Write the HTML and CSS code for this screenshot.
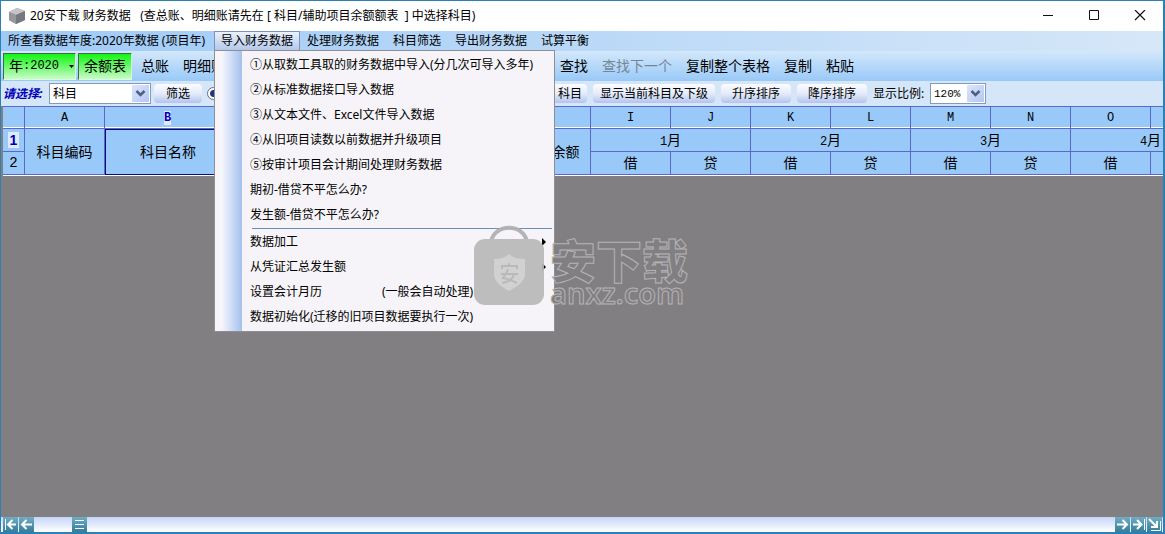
FILE: index.html
```html
<!DOCTYPE html>
<html lang="zh-CN">
<head>
<meta charset="utf-8">
<title>20安下载 财务数据</title>
<link rel="stylesheet" href="styles.css">
</head>
<body>
<div class="window">
  <header class="titlebar">
    <svg class="app-icon" width="18" height="18" viewBox="0 0 18 18"><path d="M1 5L9 1L17 4V13L8 17L1 13Z" fill="#8b8b93"/><path d="M1 5L9 1L17 4L8 8Z" fill="#c5c5c9"/><path d="M8 8L17 4V13L8 17Z" fill="#77777f"/><path d="M1 5L8 8V17L1 13Z" fill="#96969c"/></svg>
    <h1 class="title">20安下载 财务数据&nbsp;&nbsp; (查总账、明细账请先在 [ 科目/辅助项目余额额表&nbsp; ] 中选择科目)</h1>
    <div class="win-buttons">
      <button class="win-button" aria-label="最小化"><svg width="12" height="12" viewBox="0 0 12 12"><path d="M1 5.500H11" stroke="#111" fill="none"/></svg></button>
      <button class="win-button" aria-label="最大化"><svg width="12" height="12" viewBox="0 0 12 12"><path d="M1.500 0.500H10.500V9.500H1.500Z" stroke="#111" fill="none"/></svg></button>
      <button class="win-button" aria-label="关闭"><svg width="12" height="12" viewBox="0 0 12 12"><path d="M1 0L11 10M11 0L1 10" stroke="#111" stroke-width="1.200" fill="none"/></svg></button>
    </div>
  </header>

  <nav class="menubar">
    <span class="menu-label">所查看数据年度:2020年数据 (项目年)</span>
    <div class="menu-holder">
      <button class="menu-button open" aria-expanded="true">导入财务数据</button>
      <div class="popup" role="menu">
        <button class="entry" role="menuitem">①从取数工具取的财务数据中导入(分几次可导入多年)</button>
        <button class="entry" role="menuitem">②从标准数据接口导入数据</button>
        <button class="entry" role="menuitem">③从文本文件、Excel文件导入数据</button>
        <button class="entry" role="menuitem">④从旧项目读数以前数据并升级项目</button>
        <button class="entry" role="menuitem">⑤按审计项目会计期间处理财务数据</button>
        <button class="entry" role="menuitem">期初-借贷不平怎么办?</button>
        <button class="entry" role="menuitem">发生额-借贷不平怎么办?</button>
        <div class="separator" role="separator"></div>
        <button class="entry has-sub" role="menuitem">数据加工</button>
        <button class="entry has-sub" role="menuitem">从凭证汇总发生额</button>
        <button class="entry" role="menuitem">设置会计月历<span class="entry-note">(一般会自动处理)</span></button>
        <button class="entry" role="menuitem">数据初始化(迁移的旧项目数据要执行一次)</button>
      </div>
    </div>
    <button class="menu-button">处理财务数据</button>
    <button class="menu-button">科目筛选</button>
    <button class="menu-button">导出财务数据</button>
    <button class="menu-button">试算平衡</button>
  </nav>

  <div class="toolbar">
    <button class="tool green year">年<span class="mono">:2020</span><svg class="caret" width="5" height="3" viewBox="0 0 5 3"><path d="M0 0H5L2.500 3Z"/></svg></button>
    <button class="tool green">余额表</button>
    <button class="tool">总账</button>
    <button class="tool">明细账</button>
    <span class="tool-gap"></span>
    <button class="tool">查找</button>
    <button class="tool" disabled>查找下一个</button>
    <button class="tool">复制整个表格</button>
    <button class="tool">复制</button>
    <button class="tool">粘贴</button>
  </div>

  <div class="filterbar">
    <label class="pick" for="field">请选择:</label>
    <span class="combo combo-field">
      <select id="field"><option>科目</option></select>
      <svg class="drop" width="17" height="17" viewBox="0 0 17 17"><path d="M4.500 6L8.500 10L12.500 6" fill="none" stroke="#4d6185" stroke-width="2.500"/></svg>
    </span>
    <button class="pill pill-filter">筛选</button>
    <input class="radio" type="radio" name="scope" checked aria-label="科目">
    <span class="filter-gap"></span>
    <button class="pill pill-subject">科目</button>
    <button class="pill pill-current">显示当前科目及下级</button>
    <button class="pill pill-sort">升序排序</button>
    <button class="pill pill-sort">降序排序</button>
    <label class="zoom-label" for="zoom">显示比例:</label>
    <span class="combo combo-zoom">
      <select id="zoom"><option>120%</option></select>
      <svg class="drop" width="17" height="17" viewBox="0 0 17 17"><path d="M4.500 6L8.500 10L12.500 6" fill="none" stroke="#4d6185" stroke-width="2.500"/></svg>
    </span>
  </div>

  <main class="sheet">
    <table class="grid">
      <colgroup><col class="c-row"><col class="c-code"><col class="c-name"><col class="c-mid" span="5"><col class="c-month" span="9"></colgroup>
      <thead>
        <tr><th></th><th>A</th><th><b class="current">B</b></th><th></th><th></th><th></th><th></th><th></th><th></th><th>I</th><th>J</th><th>K</th><th>L</th><th>M</th><th>N</th><th>O</th><th></th></tr>
      </thead>
      <tbody>
        <tr><th><b class="current row">1</b></th><td rowspan="2">科目编码</td><td rowspan="2" class="selected">科目名称</td><td rowspan="2"></td><td rowspan="2"></td><td rowspan="2"></td><td rowspan="2"></td><td rowspan="2"></td><td rowspan="2" class="balance">余额</td><td colspan="2"><span class="mono">1</span>月</td><td colspan="2"><span class="mono">2</span>月</td><td colspan="2"><span class="mono">3</span>月</td><td colspan="2"><span class="mono">4</span>月</td></tr>
        <tr><th class="row-number">2</th><td>借</td><td>贷</td><td>借</td><td>贷</td><td>借</td><td>贷</td><td>借</td><td></td></tr>
      </tbody>
    </table>
  </main>

  <footer class="scrollbar">
    <button class="scroll" aria-label="最左"><svg width="15" height="15" viewBox="0 0 15 15"><path d="M2.500 2V13" stroke-width="1"/><path d="M13 7.500H5M9.500 3L5 7.500L9.500 12"/></svg></button>
    <button class="scroll" aria-label="向左"><svg width="15" height="15" viewBox="0 0 15 15"><path d="M13 7.500H3M7.500 3L3 7.500L7.500 12"/></svg></button>
    <button class="scroll thumb" aria-label="滑块"><svg width="15" height="15" viewBox="0 0 15 15"><path d="M3 3.500H12M3 7.500H12M3 11.500H12" stroke-width="1"/></svg></button>
    <button class="scroll right" aria-label="向右"><svg width="15" height="15" viewBox="0 0 15 15"><path d="M2 7.500H12M7.500 3L12 7.500L7.500 12"/></svg></button>
    <button class="scroll" aria-label="最右"><svg width="15" height="15" viewBox="0 0 15 15"><path d="M13.500 2V13" stroke-width="1"/><path d="M2 7.500H10M6 3L10.500 7.500L6 12"/></svg></button>
    <button class="scroll" aria-label="调整大小"><svg width="15" height="15" viewBox="0 0 15 15"><path d="M2 2L10 10M10 4V10H4"/><path d="M13.500 4V13.500H4" stroke-width="1"/></svg></button>
  </footer>

  <div class="watermark">
    <svg class="bag" width="70" height="80" viewBox="0 0 70 80">
      <path d="M17 17C20 -2 50 -2 53 17" fill="none" stroke="#afafb0" stroke-width="4"/>
      <rect x="0" y="14" width="70" height="66" rx="11" fill="#b9b9b9"/>
      <path d="M35 29C31 33 26 34 20 34V49C20 57 28 62 35 66C42 62 51 57 51 49V34C44 34 39 33 35 29Z" fill="#cfcfcf"/>
      <path d="M35 38V41M28 44V41H43V44M27 49H44M34 44C33 49 31 51 29 53C34 54 39 56 43 58M40 49C39 54 34 57 28 58" fill="none" stroke="#b5b5b5" stroke-width="2"/>
    </svg>
    <div class="brand"><span class="brand-name">安下载</span><span class="brand-site">anxz.com</span></div>
  </div>
</div>
</body>
</html>
```
FILE: styles.css
```css
* { box-sizing: border-box; }
body {
  margin: 0;
  font: 12px/18px "Noto Sans", "Noto Sans CJK SC", sans-serif;
  color: #000;
}
button, select { font: inherit; color: inherit; }
button { border: 0; margin: 0; padding: 0; background: none; white-space: nowrap; flex-shrink: 0; }
svg { display: block; }
.mono { font-family: "Liberation Mono", monospace; font-size: 12px; line-height: 12px; }

.window {
  position: relative;
  height: 100vh;
  display: flex;
  flex-direction: column;
  border: 1px solid #2b81b5;
  border-right-width: 2px;
  border-bottom-width: 2px;
  overflow: hidden;
}

.titlebar { display: flex; align-items: center; height: 30px; padding-left: 7px; background: #fff; }
.title { margin: 0 0 0 4px; font-size: 12px; font-weight: 400; white-space: nowrap; }
.win-buttons { display: flex; margin-left: auto; }
.win-button { display: grid; place-items: center; width: 46px; height: 28px; }

.menubar {
  display: flex;
  height: 20px;
  background: linear-gradient(90deg, #9ecaf7, #d6e7f8);
}
.menu-label { padding: 0 7px; width: 213px; line-height: 20px; white-space: nowrap; }
.menu-holder { position: relative; }
.menu-button { padding: 0 7px; height: 19px; line-height: 18px; }
.menu-button.open {
  background: linear-gradient(#eaf1fc, #b4c8ea);
  border: 1px solid #7c93bd;
  border-bottom: 0;
  padding: 0 6px;
}

.popup {
  position: absolute;
  z-index: 2;
  left: 0;
  top: 19px;
  width: 341px;
  padding: 1px 2px 2px 0;
  border: 1px solid #8e8e96;
  background: linear-gradient(90deg, #f7f5f9 6px, #f4f6fc 7px, #a4c0ee 27px, #f6f4f8 27px);
}
.entry { display: flex; align-items: center; width: 100%; height: 25px; padding-left: 35px; text-align: left; }
.entry-note { margin-left: 60px; }
.has-sub::after {
  content: "";
  margin: 0 6px 0 auto;
  border: 4px solid transparent;
  border-left-color: #000;
  border-right: 0;
}
.separator { height: 1px; margin: 1px 0 0 37px; background: #6b8fb8; }

.toolbar {
  display: flex;
  align-items: center;
  height: 30px;
  padding-left: 2px;
  font-size: 14px;
  background: linear-gradient(#d3e8fb, #99c9f8);
}
.tool { height: 27px; padding: 0 7px; }
.tool:disabled { color: #758696; }
.tool.green {
  margin-right: 2px;
  padding: 0 5px;
  border: 1px solid #3c6c4c;
  border-right-color: #d9ffd9;
  border-bottom-color: #d9ffd9;
  background: linear-gradient(#12f512, #c9fcc9);
}
.tool.year { display: flex; align-items: center; width: 73px; padding-right: 1px; }
.caret { margin-left: auto; }
.tool-gap { width: 321px; flex: none; }

.filterbar {
  display: flex;
  align-items: center;
  height: 25px;
  padding-left: 2px;
  background: #d4e6f8;
}
.pick { width: 46px; font-weight: 700; font-style: italic; color: #0000b8; white-space: nowrap; }
.combo { position: relative; flex: none; height: 21px; }
.combo select {
  appearance: none;
  display: block;
  width: 100%;
  height: 100%;
  padding: 0 3px;
  border: 1px solid #7f9db9;
  border-radius: 0;
  background: #fff;
}
.combo-field { width: 102px; }
.combo-zoom { width: 56px; }
.combo-zoom select { font-family: "Liberation Mono", monospace; font-size: 11px; }
.drop { position: absolute; right: 2px; top: 2px; background: linear-gradient(135deg, #dce5fd, #b5c7f2); pointer-events: none; }
.pill {
  height: 19px;
  margin-right: 6px;
  line-height: 18px;
  border-radius: 4px;
  background: linear-gradient(#fbfcff, #e4ebfa 50%, #b3c4ec);
}
.pill-filter { width: 48px; margin: 0 5px 0 3px; }
.radio {
  appearance: none;
  width: 13px;
  height: 13px;
  margin: 0;
  flex: none;
  border: 1px solid #60708c;
  border-radius: 50%;
  background: radial-gradient(circle, #26367c 3px, #fff 4px);
}
.filter-gap { width: 327px; flex: none; }
.pill-subject { width: 40px; padding-left: 6px; }
.pill-current { width: 122px; }
.pill-sort { width: 70px; }
.zoom-label { width: 57px; white-space: nowrap; }

.sheet { flex: 1; min-height: 0; padding-left: 2px; overflow: hidden; background: #827f82; }
.grid {
  table-layout: fixed;
  width: 1228px;
  border-spacing: 0;
  background: #99c9f9;
  border-top: 1px solid #5a68cc;
  border-bottom: 1px solid #fff;
  font-size: 14px;
  text-align: center;
}
.c-row { width: 22px; }
.c-code { width: 80px; }
.c-name { width: 126px; }
.c-mid { width: 56px; }
.c-month { width: 80px; }
.grid th, .grid td { padding: 0; border-right: 1px solid #5a68cc; border-bottom: 1px solid #5a68cc; font-weight: 400; white-space: nowrap; }
.grid thead th { height: 22px; font: 12px/20px "Liberation Mono", monospace; box-shadow: inset 0 -1px #fff; }
.grid tbody th, .grid tbody td { height: 23px; line-height: 20px; }
.grid .current { background: #e2e9fc; color: #0000b8; line-height: 14px; }
.grid .row { padding: 0 2px; font-family: "Liberation Sans", sans-serif; }
.grid .row-number { font-family: "Liberation Mono", monospace; }
.grid td.selected { border: 1px solid #0d0d70; }
.grid td.balance { padding-left: 30px; }

.scrollbar {
  display: flex;
  align-items: center;
  gap: 1px;
  height: 15px;
  padding: 0 1px 0 2px;
  background: linear-gradient(#c4d6f8, #fff);
}
.scroll { width: 15px; height: 15px; background: linear-gradient(#71adc3, #347d9c); }
.scroll path { fill: none; stroke: #fff; stroke-width: 2; }
.scroll path[stroke-width="1"] { stroke-width: 1; }
.scroll.thumb { margin-left: 37px; }
.scroll.right { margin-left: auto; }

.watermark { position: absolute; z-index: 3; left: 473px; top: 224px; display: flex; pointer-events: none; }
.bag { opacity: 0.92; }
.brand { display: flex; flex-direction: column; margin-left: 6px; padding-top: 8px; color: #827f82; -webkit-text-stroke: 1px #b5b4b6; }
.brand-name { font-size: 46px; line-height: 50px; font-weight: 900; font-family: "Noto Sans CJK SC", sans-serif; }
.brand-site { font-size: 29px; line-height: 20px; font-weight: 600; }
```
